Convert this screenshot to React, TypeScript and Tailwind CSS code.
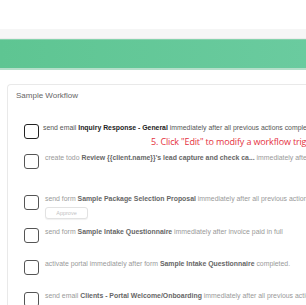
import { ReactNode } from 'react'

interface StepProps {
  active?: boolean
  height: string
  children: ReactNode
  extra?: ReactNode
}

function Step({ active, height, children, extra }: StepProps) {
  return (
    <div className={`flex items-start ${height}`}>
      <div
        className={`flex-none w-[15px] min-w-[15px] h-[15px] rounded-[3px] border-[1.5px] ${
          active ? 'border-[#222]' : 'border-[#555]'
        }`}
      />
      <div className={`flex-none flex flex-col items-start ${active ? 'ml-[4px]' : 'ml-[6px]'}`}>
        <p
          className={`whitespace-nowrap text-[6.9px] leading-[8px] ${
            active ? 'text-[#555]' : 'text-[#999]'
          }`}
        >
          {children}
        </p>
        {extra}
      </div>
    </div>
  )
}

function B({ children, active }: { children: ReactNode; active?: boolean }) {
  return <span className={`font-bold ${active ? 'text-[#222]' : 'text-[#666]'}`}>{children}</span>
}

export default function App() {
  return (
    <div
      className="relative w-[306px] h-[305px] overflow-hidden bg-white"
      style={{ fontFamily: '"Liberation Sans", Arial, sans-serif' }}
    >
      {/* top chrome */}
      <div className="h-[29px] bg-white" />
      <div className="h-[10px] bg-[#f6f6f6] border-b border-[#ececec]" />
      <div className="h-[31px] bg-gradient-to-r from-[#5ec592] to-[#6acb9f] border-t border-[#86d3ad] border-b-2 border-b-[#b5dfca]" />

      {/* workflow card */}
      <div className="pl-[7px] pt-[14px]">
        <div className="rounded-tl-[4px] border-l border-t border-[#e9e9e9] pl-[8px] pt-[6px] h-[240px]">
          <h2 className="text-[8px] leading-[10px] text-[#666]">Sample Workflow</h2>

          <div className="mt-[23px] ml-[8px]">
            <Step active height="h-[30px]">
              send email <B active>Inquiry Response - General</B> immediately after all previous actions completed
            </Step>
            <Step height="h-[41px]">
              create todo <B>Review {'{{client.name}}'}'s lead capture and check ca...</B> immediately after all previous actions completed
            </Step>
            <Step
              height="h-[33px]"
              extra={
                <button className="mt-[4px] w-[43px] h-[12px] rounded-[3px] border border-[#e2e2e2] bg-white text-[5.5px] leading-[10px] text-[#c2c2c2] shadow-[0_1px_1px_rgba(0,0,0,0.06)]">
                  Approve
                </button>
              }
            >
              send form <B>Sample Package Selection Proposal</B> immediately after all previous actions completed
            </Step>
            <Step height="h-[32px]">
              send form <B>Sample Intake Questionnaire</B> immediately after invoice paid in full
            </Step>
            <Step height="h-[32px]">
              activate portal immediately after form <B>Sample Intake Questionnaire</B> completed.
            </Step>
            <Step height="h-[32px]">
              send email <B>Clients - Portal Welcome/Onboarding</B> immediately after all previous actions completed
            </Step>
          </div>
        </div>
      </div>

      {/* tutorial hint */}
      <p
        className="absolute left-[151px] top-[136px] whitespace-nowrap text-[9px] leading-[12px] tracking-[-0.15px] text-[#e5323e]"
        style={{ fontFamily: '"Open Sans", sans-serif' }}
      >
        5. Click "Edit" to modify a workflow trigger
      </p>
    </div>
  )
}
